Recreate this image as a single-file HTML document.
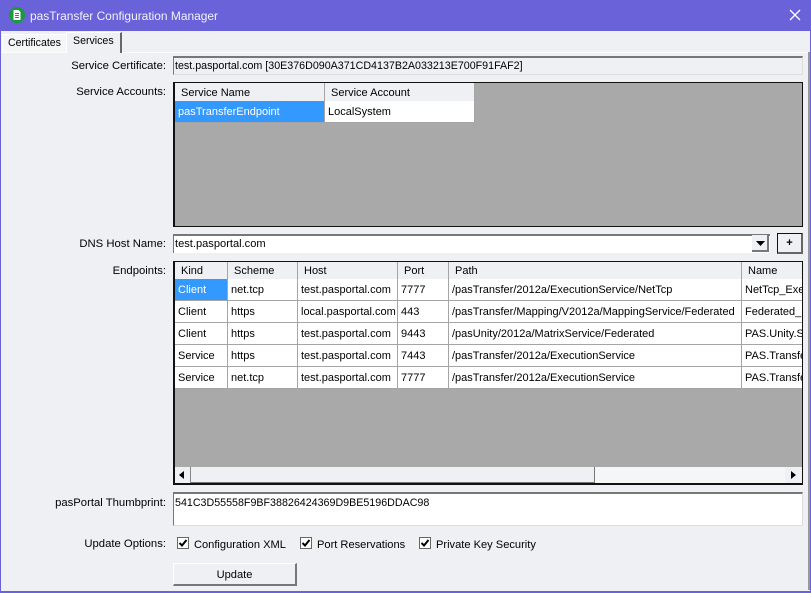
<!DOCTYPE html>
<html><head><meta charset="utf-8"><style>
html,body{margin:0;padding:0}
body{width:811px;height:593px;overflow:hidden;position:relative;background:#eef0f4;font-family:"Liberation Sans",sans-serif;font-size:11.1px;color:#000}
div,span{position:absolute;white-space:nowrap;box-sizing:border-box}
.l{right:645px;text-align:right;height:15px;line-height:15px;font-size:11.3px}
.c{background:#fff;border-right:1px solid #a5a5a5;border-bottom:1px solid #a5a5a5;height:22px;line-height:23px;padding-left:3px;overflow:hidden;font-size:11px}
.h{height:17px;line-height:19px;background:#eef0f4;border-right:1px solid #a5a5a5;padding-left:6px;overflow:hidden;font-size:11px}
.cb{width:12px;height:12px;background:#fff;border:1px solid #666;top:537px}
.cb svg{position:absolute;left:0;top:0}
</style></head><body>
<div style="left:0;top:0;width:811px;height:31px;background:#6a62d8"></div>
<div style="left:0;top:31px;width:1px;height:562px;background:#6a62d8"></div>
<div style="left:810px;top:31px;width:1px;height:562px;background:#6a62d8"></div>
<div style="left:0;top:591px;width:811px;height:2px;background:#6a62d8"></div>
<svg style="position:absolute;left:8px;top:6px" width="18" height="18" viewBox="0 0 18 18"><circle cx="9" cy="9" r="8" fill="#1a9a3c"/><path d="M5.5 4h5l2 2v8h-7z" fill="#fff"/><path d="M7 7.5h4M7 9.5h4M7 11.5h4" stroke="#1a9a3c"/></svg>
<div style="left:30px;top:8px;line-height:17px;font-size:11.95px;color:#f2f2fa">pasTransfer Configuration Manager</div>
<svg style="position:absolute;left:789px;top:9px" width="13" height="13" viewBox="0 0 13 13"><path d="M1 1l10 10M11 1L1 11" stroke="#fff" stroke-width="1.3" fill="none"/></svg>

<div style="left:1px;top:52px;width:809px;height:1px;background:#fbfbfb"></div>
<div style="left:2px;top:34px;width:64px;height:18px;background:#f5f6f8;border-top:1px solid #fff;border-left:1px solid #fff"></div>
<div style="left:8px;top:36px;line-height:15px;font-size:10.6px">Certificates</div>
<div style="left:66px;top:32px;width:56px;height:21px;background:#eef0f4;border-top:1px solid #fff;border-left:1px solid #fff;border-right:2px solid #666"></div>
<div style="left:73px;top:34px;line-height:15px;font-size:10.6px">Services</div>
<div style="left:808px;top:52px;width:2px;height:538px;background:#999"></div>

<div class="l" style="top:59px">Service Certificate:</div>
<div style="left:173px;top:56px;width:630px;height:19px;border-top:2px solid #777;border-left:1px solid #777;border-right:1px solid #ddd;border-bottom:1px solid #ddd"></div>
<div style="left:175px;top:59px;line-height:15px;font-size:10.7px">test.pasportal.com [30E376D090A371CD4137B2A033213E700F91FAF2]</div>

<div class="l" style="top:85px">Service Accounts:</div>
<div style="left:173px;top:82px;width:630px;height:145px;background:#a9a9a9;border:1px solid #111;border-left-width:2px"></div>
<div class="h" style="left:175px;top:83px;width:150px;height:18px;line-height:20px">Service Name</div>
<div class="h" style="left:325px;top:83px;width:150px;height:18px;line-height:20px">Service Account</div>
<div class="c" style="left:175px;top:101px;width:150px;background:#3399ff;color:#fff">pasTransferEndpoint</div>
<div class="c" style="left:325px;top:101px;width:150px">LocalSystem</div>

<div class="l" style="top:237px">DNS Host Name:</div>
<div style="left:173px;top:234px;width:597px;height:19px;background:#fff;border-top:2px solid #777;border-left:1px solid #777"></div>
<div style="left:175px;top:237px;line-height:15px">test.pasportal.com</div>
<div style="left:752px;top:235px;width:17px;height:17px;background:#eef0f4;border-right:2px solid #777;border-bottom:2px solid #777"></div>
<svg style="position:absolute;left:756px;top:241px" width="10" height="6"><path d="M0 0h9L4.5 5z" fill="#000"/></svg>
<div style="left:777px;top:233px;width:26px;height:21px;background:#eef0f4;border:1px solid #111;border-right:2px solid #666;border-bottom:2px solid #666;text-align:center;line-height:19px;font-weight:bold">+</div>

<div class="l" style="top:264px">Endpoints:</div>
<div style="left:173px;top:261px;width:630px;height:224px;background:#a9a9a9;border:1px solid #111;border-left-width:2px;border-bottom-width:2px"></div>
<div class="h" style="left:175px;top:262px;width:53px">Kind</div>
<div class="h" style="left:228px;top:262px;width:70px">Scheme</div>
<div class="h" style="left:298px;top:262px;width:100px">Host</div>
<div class="h" style="left:398px;top:262px;width:51px">Port</div>
<div class="h" style="left:449px;top:262px;width:293px">Path</div>
<div class="h" style="left:742px;top:262px;width:60px;border-right:0">Name</div>

<div class="c" style="left:175px;top:279px;width:53px;background:#3399ff;color:#fff">Client</div>
<div class="c" style="left:228px;top:279px;width:70px">net.tcp</div>
<div class="c" style="left:298px;top:279px;width:100px">test.pasportal.com</div>
<div class="c" style="left:398px;top:279px;width:51px">7777</div>
<div class="c" style="left:449px;top:279px;width:293px">/pasTransfer/2012a/ExecutionService/NetTcp</div>
<div class="c" style="left:742px;top:279px;width:60px;border-right:0">NetTcp_ExecutionService</div>

<div class="c" style="left:175px;top:301px;width:53px">Client</div>
<div class="c" style="left:228px;top:301px;width:70px">https</div>
<div class="c" style="left:298px;top:301px;width:100px">local.pasportal.com</div>
<div class="c" style="left:398px;top:301px;width:51px">443</div>
<div class="c" style="left:449px;top:301px;width:293px">/pasTransfer/Mapping/V2012a/MappingService/Federated</div>
<div class="c" style="left:742px;top:301px;width:60px;border-right:0">Federated_MappingService</div>

<div class="c" style="left:175px;top:323px;width:53px">Client</div>
<div class="c" style="left:228px;top:323px;width:70px">https</div>
<div class="c" style="left:298px;top:323px;width:100px">test.pasportal.com</div>
<div class="c" style="left:398px;top:323px;width:51px">9443</div>
<div class="c" style="left:449px;top:323px;width:293px">/pasUnity/2012a/MatrixService/Federated</div>
<div class="c" style="left:742px;top:323px;width:60px;border-right:0">PAS.Unity.Services</div>

<div class="c" style="left:175px;top:345px;width:53px">Service</div>
<div class="c" style="left:228px;top:345px;width:70px">https</div>
<div class="c" style="left:298px;top:345px;width:100px">test.pasportal.com</div>
<div class="c" style="left:398px;top:345px;width:51px">7443</div>
<div class="c" style="left:449px;top:345px;width:293px">/pasTransfer/2012a/ExecutionService</div>
<div class="c" style="left:742px;top:345px;width:60px;border-right:0">PAS.Transfer.Services</div>

<div class="c" style="left:175px;top:367px;width:53px">Service</div>
<div class="c" style="left:228px;top:367px;width:70px">net.tcp</div>
<div class="c" style="left:298px;top:367px;width:100px">test.pasportal.com</div>
<div class="c" style="left:398px;top:367px;width:51px">7777</div>
<div class="c" style="left:449px;top:367px;width:293px">/pasTransfer/2012a/ExecutionService</div>
<div class="c" style="left:742px;top:367px;width:60px;border-right:0">PAS.Transfer.Services</div>

<div style="left:175px;top:467px;width:627px;height:16px;background:#f5f6f8"></div>
<div style="left:175px;top:467px;width:16px;height:16px;background:#eef0f4;border-right:1px solid #888"></div>
<svg style="position:absolute;left:179px;top:471px" width="6" height="9"><path d="M5 0v8L0 4z" fill="#000"/></svg>
<div style="left:191px;top:467px;width:404px;height:16px;background:#eef0f4;border-right:1px solid #777;border-bottom:1px solid #777"></div>
<div style="left:785px;top:467px;width:17px;height:16px;background:#eef0f4"></div>
<svg style="position:absolute;left:791px;top:471px" width="6" height="9"><path d="M0 0v8l5-4z" fill="#000"/></svg>

<div class="l" style="top:496px">pasPortal Thumbprint:</div>
<div style="left:173px;top:492px;width:630px;height:34px;background:#fff;border-top:2px solid #777;border-left:1px solid #777;border-right:1px solid #ddd;border-bottom:1px solid #ddd"></div>
<div style="left:175px;top:496px;line-height:15px;font-size:10.7px">541C3D55558F9BF38826424369D9BE5196DDAC98</div>

<div class="l" style="top:537px">Update Options:</div>
<div class="cb" style="left:177px"><svg width="10" height="10"><path d="M1.5 5l2.5 2.5L8.5 2" stroke="#000" stroke-width="2" fill="none"/></svg></div>
<div style="left:194px;top:538px;line-height:15px">Configuration XML</div>
<div class="cb" style="left:300px"><svg width="10" height="10"><path d="M1.5 5l2.5 2.5L8.5 2" stroke="#000" stroke-width="2" fill="none"/></svg></div>
<div style="left:317px;top:538px;line-height:15px">Port Reservations</div>
<div class="cb" style="left:419px"><svg width="10" height="10"><path d="M1.5 5l2.5 2.5L8.5 2" stroke="#000" stroke-width="2" fill="none"/></svg></div>
<div style="left:436px;top:538px;line-height:15px">Private Key Security</div>

<div style="left:173px;top:563px;width:124px;height:23px;background:#eef0f4;border-top:1px solid #fff;border-left:1px solid #fff;border-right:2px solid #777;border-bottom:2px solid #777;text-align:center;line-height:22px">Update</div>
</body></html>
